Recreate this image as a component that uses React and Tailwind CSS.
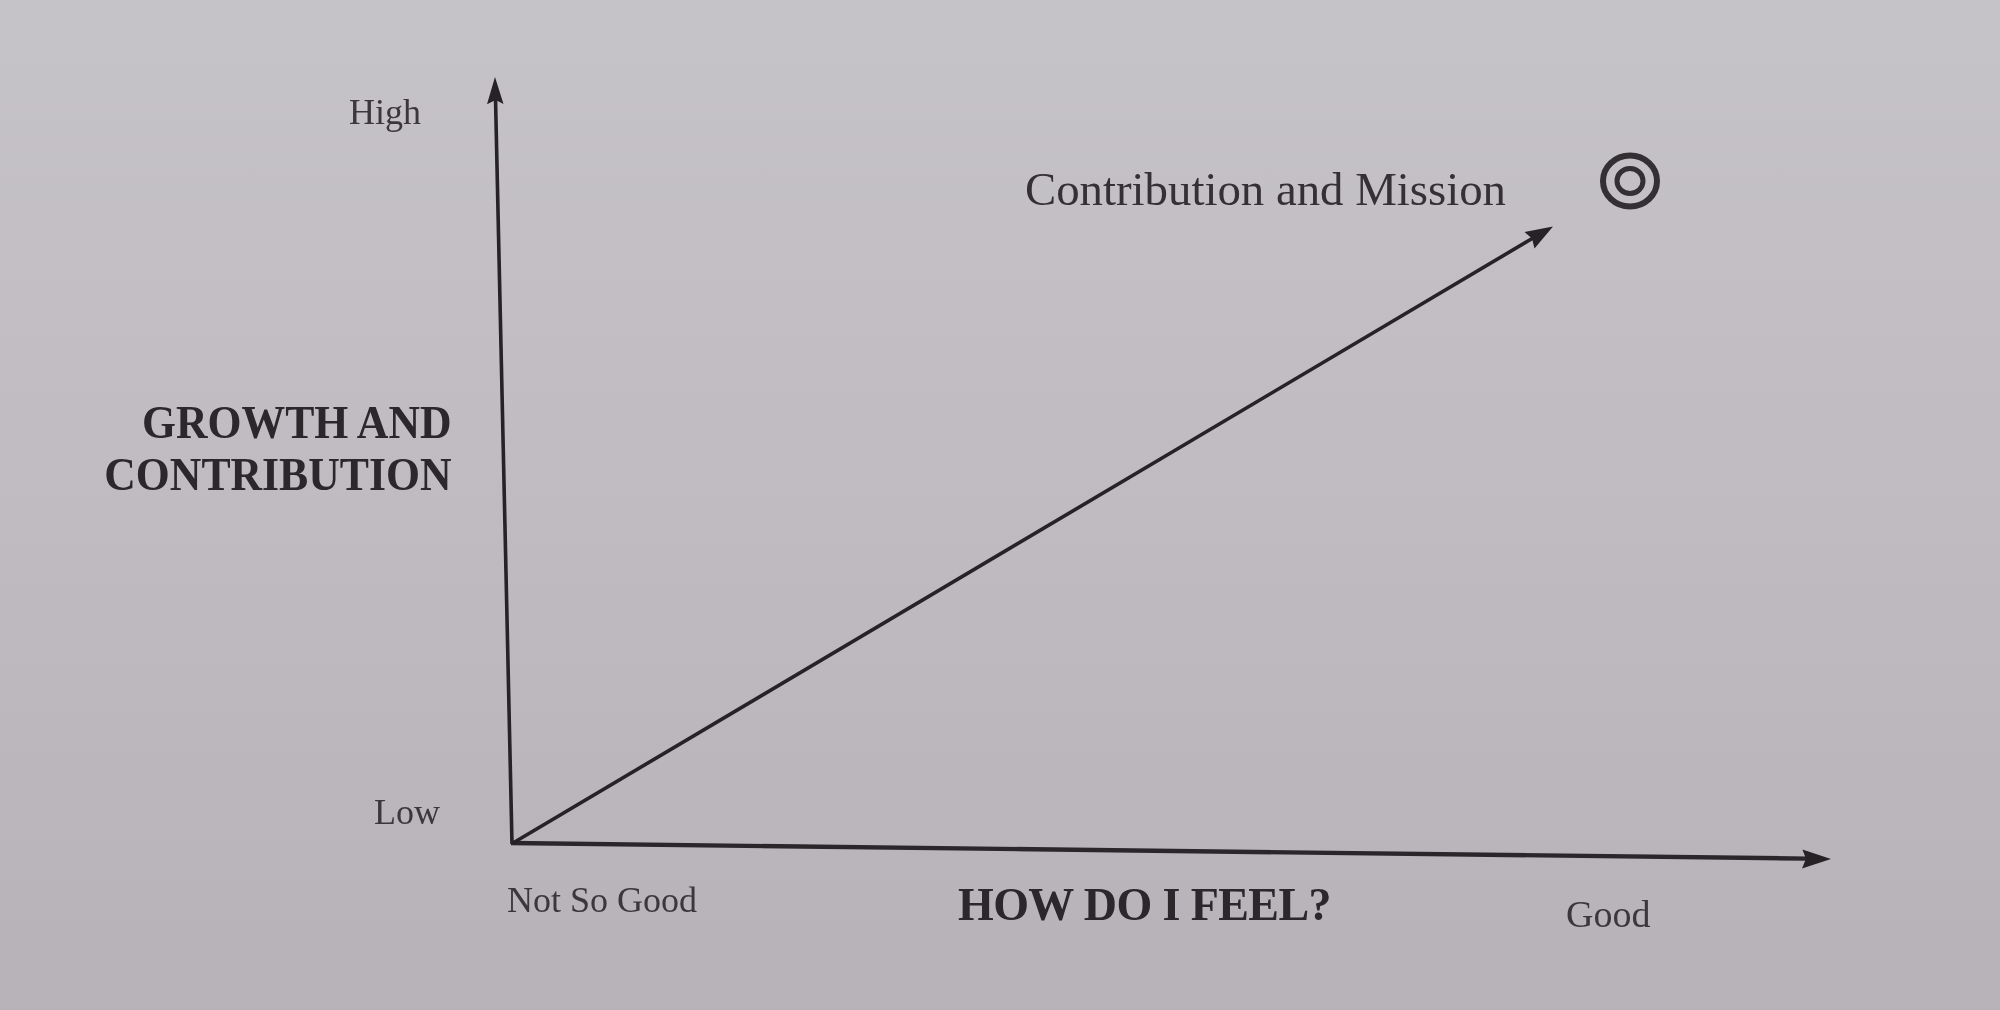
export default function App() {
  const serif = { fontFamily: '"Liberation Serif", "DejaVu Serif", serif' };
  return (
    <div
      className="relative w-[2000px] h-[1010px] overflow-hidden bg-linear-to-b from-[#c6c3c8] via-[#bfbbc1] to-[#b7b2b8]"
      style={serif}
    >
      <div className="absolute inset-0 blur-[0.7px]">
        <svg
          className="absolute inset-0"
          width="2000"
          height="1010"
          viewBox="0 0 2000 1010"
        >
          {/* vertical axis */}
          <line x1="512" y1="844" x2="495.5" y2="98" stroke="#262226" strokeWidth="3.6" />
          <polygon points="495,77 503.5,104 495.6,100 487,104.3" fill="#262226" />
          {/* horizontal axis */}
          <line x1="511" y1="843" x2="1808" y2="858.6" stroke="#2a262a" strokeWidth="4.4" />
          <polygon points="1831,859 1802,868.5 1806,858.7 1802.4,849.5" fill="#262226" />
          {/* diagonal */}
          <line x1="513" y1="843" x2="1533" y2="238" stroke="#262226" strokeWidth="3.6" />
          <polygon points="1553,226.5 1534.5,248.5 1532,238.6 1524.5,232" fill="#262226" />
          {/* target circle */}
          <ellipse cx="1630" cy="181" rx="27" ry="25.5" fill="none" stroke="#332f33" strokeWidth="6" />
          <ellipse cx="1630" cy="181" rx="13" ry="12.5" fill="none" stroke="#332f33" strokeWidth="5" />
        </svg>

        <div className="absolute top-[94px] right-[1579px] text-[36px] leading-none text-[#3b373b]">
          High
        </div>

        <div className="absolute top-[397px] right-[1548px] origin-right scale-x-[0.95] text-right text-[46px] leading-[52px] font-bold text-[#2b272b]">
          <div>GROWTH AND</div>
          <div>CONTRIBUTION</div>
        </div>

        <div className="absolute top-[794px] right-[1560px] text-[36px] leading-none text-[#3b373b]">
          Low
        </div>

        <div className="absolute top-[882px] left-[507px] text-[36px] leading-none text-[#3b373b] whitespace-nowrap">
          Not So Good
        </div>

        <div className="absolute top-[882px] left-[958px] text-[46px] leading-none font-bold tracking-[-0.6px] text-[#2b272b] whitespace-nowrap">
          HOW DO I FEEL?
        </div>

        <div className="absolute top-[895px] left-[1566px] text-[38px] leading-none text-[#3b373b]">
          Good
        </div>

        <div className="absolute top-[166px] left-[1025px] text-[46.8px] leading-none text-[#343034] whitespace-nowrap">
          Contribution and Mission
        </div>
      </div>
    </div>
  );
}
